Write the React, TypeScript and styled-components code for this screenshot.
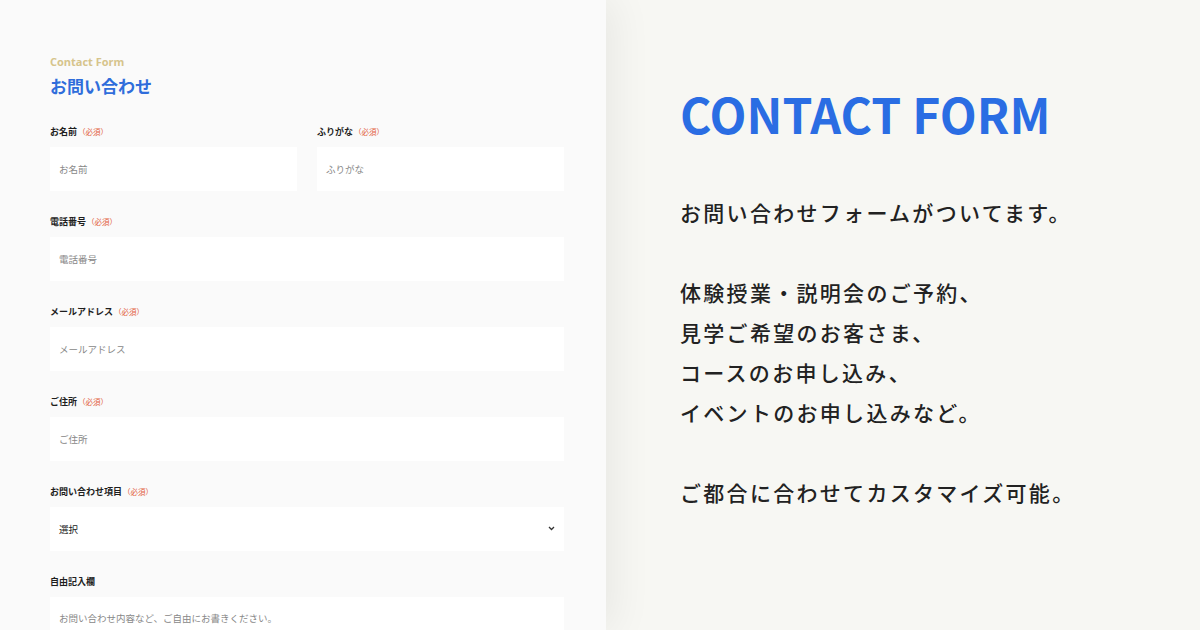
import React from "react";
import styled, { createGlobalStyle } from "styled-components";

const GlobalStyle = createGlobalStyle`
  html, body {
    margin: 0;
    padding: 0;
    width: 1200px;
    height: 630px;
    overflow: hidden;
  }
  body {
    font-family: "Noto Sans CJK JP", "Noto Sans", sans-serif;
    color: #222;
  }
`;

interface Field {
  label: string;
  placeholder: string;
  required?: boolean;
  select?: boolean;
}

const Page = styled.div`
  display: flex;
  width: 1200px;
  height: 630px;
  overflow: hidden;
`;

const FormPanel = styled.div`
  position: relative;
  z-index: 1;
  width: 606px;
  flex-shrink: 0;
  box-sizing: border-box;
  padding: 54px 42px 0 50px;
  background: #fafafa;
  box-shadow: 6px 0 40px rgba(0, 0, 0, 0.07);
`;

const SubTitle = styled.div`
  font-family: "Open Sans", "Noto Sans", sans-serif;
  font-weight: 700;
  font-size: 11px;
  line-height: 16px;
  color: #d6c48c;
`;

const Title = styled.h1`
  margin: 4px 0 0;
  font-size: 17px;
  line-height: 24px;
  font-weight: 700;
  color: #2f6ddb;
`;

const Grid = styled.div`
  margin-top: 27px;
  display: grid;
  grid-template-columns: 1fr 1fr;
  column-gap: 20px;
  row-gap: 24px;
`;

const Group = styled.div<{ $wide?: boolean }>`
  grid-column: ${(p) => (p.$wide ? "1 / span 2" : "auto")};
  display: flex;
  flex-direction: column;
`;

const Label = styled.div`
  height: 22px;
  font-size: 9px;
  font-weight: 700;
  color: #1e1e1e;
  line-height: 14px;
`;

const Required = styled.span`
  font-size: 7.5px;
  font-weight: 400;
  color: #e2603c;
  margin-left: 1px;
`;

const Input = styled.div<{ $filled?: boolean; $tall?: boolean }>`
  position: relative;
  height: ${(p) => (p.$tall ? "60px" : "44px")};
  background: #fff;
  box-sizing: border-box;
  padding: 0 9px;
  display: flex;
  align-items: ${(p) => (p.$tall ? "flex-start" : "center")};
  padding-top: ${(p) => (p.$tall ? "14px" : "0")};
  font-size: 9.5px;
  color: ${(p) => (p.$filled ? "#222" : "#888")};
`;

const Chevron = styled.svg`
  position: absolute;
  right: 9px;
  top: 50%;
  margin-top: -3px;
`;

const InfoPanel = styled.div`
  flex: 1;
  background: #f7f7f3;
  box-sizing: border-box;
  padding: 77px 0 0 74px;
`;

const BigTitle = styled.h2`
  margin: 0;
  font-size: 48px;
  line-height: 72px;
  font-weight: 700;
  color: #2a6de3;
  letter-spacing: 0;
`;

const Body = styled.div`
  margin-top: 43px;
  font-size: 21px;
  font-weight: 500;
  line-height: 40px;
  letter-spacing: 2.3px;
  color: #222;
`;

const Para = styled.p`
  margin: 0 0 40px;
`;

const fields: Field[][] = [
  [
    { label: "お名前", placeholder: "お名前", required: true },
    { label: "ふりがな", placeholder: "ふりがな", required: true },
  ],
  [{ label: "電話番号", placeholder: "電話番号", required: true }],
  [{ label: "メールアドレス", placeholder: "メールアドレス", required: true }],
  [{ label: "ご住所", placeholder: "ご住所", required: true }],
  [{ label: "お問い合わせ項目", placeholder: "選択", required: true, select: true }],
  [{ label: "自由記入欄", placeholder: "お問い合わせ内容など、ご自由にお書きください。" }],
];

export default function App() {
  return (
    <Page>
      <GlobalStyle />
      <FormPanel>
        <SubTitle>Contact Form</SubTitle>
        <Title>お問い合わせ</Title>
        <Grid>
          {fields.map((row) =>
            row.map((f) => (
              <Group key={f.label} $wide={row.length === 1}>
                <Label>
                  {f.label}
                  {f.required && <Required>（必須）</Required>}
                </Label>
                <Input $filled={f.select} $tall={f.label === "自由記入欄"}>
                  {f.placeholder}
                  {f.select && (
                    <Chevron width="7" height="5" viewBox="0 0 7 5">
                      <path d="M1 1l2.5 2.5L6 1" fill="none" stroke="#333" strokeWidth="1.3" />
                    </Chevron>
                  )}
                </Input>
              </Group>
            ))
          )}
        </Grid>
      </FormPanel>
      <InfoPanel>
        <BigTitle>CONTACT FORM</BigTitle>
        <Body>
          <Para>お問い合わせフォームがついてます。</Para>
          <Para>
            体験授業・説明会のご予約、
            <br />
            見学ご希望のお客さま、
            <br />
            コースのお申し込み、
            <br />
            イベントのお申し込みなど。
          </Para>
          <Para>ご都合に合わせてカスタマイズ可能。</Para>
        </Body>
      </InfoPanel>
    </Page>
  );
}
